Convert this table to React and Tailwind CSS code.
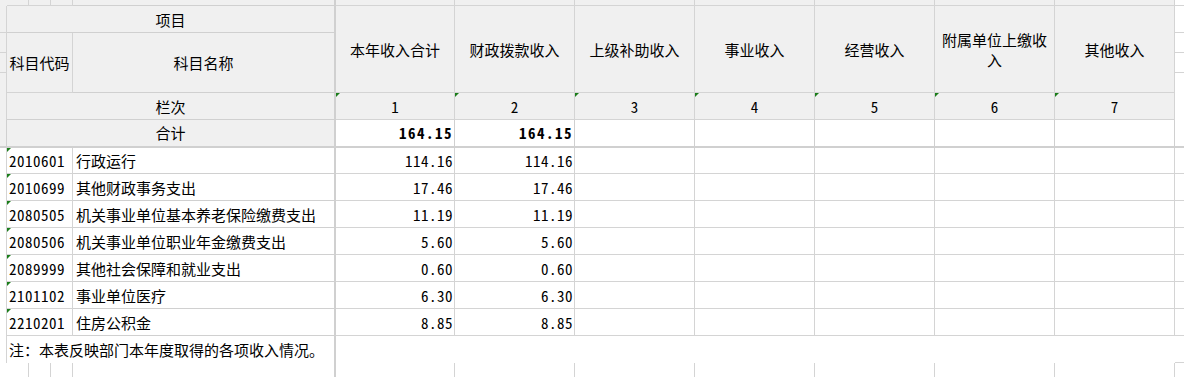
import React from 'react';

const heads = ['本年收入合计', '财政拨款收入', '上级补助收入', '事业收入', '经营收入', '附属单位上缴收入', '其他收入'];

const rows = [
    ['2010601', '行政运行', '114.16'],
    ['2010699', '其他财政事务支出', '17.46'],
    ['2080505', '机关事业单位基本养老保险缴费支出', '11.19'],
    ['2080506', '机关事业单位职业年金缴费支出', '5.60'],
    ['2089999', '其他社会保障和就业支出', '0.60'],
    ['2101102', '事业单位医疗', '6.30'],
    ['2210201', '住房公积金', '8.85'],
];

// little green corner marker on cells stored as text
const Flag = () => (
    <span className="absolute left-0 top-0 h-0 w-0 border-t-[4px] border-r-[4px] border-t-[#1b7d1b] border-r-transparent" />
);

const App = () => {
    return (
        <div className="grid h-[377px] w-[1184px] overflow-hidden bg-white font-['Noto_Sans_CJK_SC',sans-serif] text-[15px] leading-[20px] text-black [font-feature-settings:'hwid'] grid-cols-[7px_22px_22px_22px_263px_119px_repeat(6,120px)_1fr] grid-rows-[6px_27px_20px_20px_20px_27px_28px_26px_repeat(6,27px)_27px_1fr]">
            {/* top strip */}
            <div className="bg-[#f0f0f0]" />
            <div className="bg-[#f0f0f0] border-r border-b border-[#d4d4d4]" />
            <div className="bg-[#f0f0f0] border-r border-b border-[#d4d4d4]" />
            <div className="bg-[#f0f0f0] border-r border-b border-[#d4d4d4]" />
            <div className="bg-[#f0f0f0] border-r-2 border-b border-[#d0d0d0]" />
            {heads.map((h) => (
                <div key={h} className="bg-[#f0f0f0] border-r border-b border-[#d4d4d4]" />
            ))}
            <div className="border-b border-[#d4d4d4]" />

            {/* header row 1 */}
            <div className="bg-[#f0f0f0] border-r border-b border-[#d4d4d4]" />
            <div className="col-span-4 flex items-center justify-center pt-[1px] bg-[#f0f0f0] border-r-2 border-b border-[#d0d0d0]">
                项目
            </div>
            {heads.map((h) => (
                <div key={h} className="row-span-4 flex items-center justify-center px-[5px] pt-[1px] text-center bg-[#f0f0f0] border-r border-b border-[#d4d4d4]">
                    {h}
                </div>
            ))}
            <div className="border-b border-[#d4d4d4]" />

            {/* header row 2 */}
            <div className="bg-[#f0f0f0] border-r border-b border-[#d4d4d4]" />
            <div className="col-span-3 row-span-3 flex items-center justify-center pt-[1px] bg-[#f0f0f0] border-r border-b border-[#d4d4d4]">
                科目代码
            </div>
            <div className="row-span-3 flex items-center justify-center pt-[1px] bg-[#f0f0f0] border-r-2 border-b border-[#d0d0d0]">
                科目名称
            </div>
            <div className="border-b border-[#d4d4d4]" />
            <div className="bg-[#f0f0f0] border-r border-b border-[#d4d4d4]" />
            <div className="border-b border-[#d4d4d4]" />
            <div className="bg-[#f0f0f0] border-r border-[#d4d4d4]" />
            <div />

            {/* 栏次 */}
            <div className="bg-[#f0f0f0] border-r border-[#d4d4d4]" />
            <div className="col-span-4 flex items-center justify-center pt-[1px] bg-[#f0f0f0] border-r-2 border-b border-[#d0d0d0]">
                栏次
            </div>
            {heads.map((h, i) => (
                <div key={h} className="relative flex items-center justify-center pt-[1px] bg-[#f0f0f0] border-r border-b border-[#d4d4d4]">
                    <Flag />
                    {i + 1}
                </div>
            ))}
            <div />

            {/* 合计 */}
            <div className="bg-[#f0f0f0] border-r border-b-2 border-[#d0d0d0]" />
            <div className="col-span-4 flex items-center justify-center bg-[#f0f0f0] border-r-2 border-b-2 border-[#d0d0d0]">
                合计
            </div>
            {heads.map((h, i) => (
                <div key={h} className="flex items-center justify-end pr-[1px] font-bold tracking-[1.5px] border-r border-b-2 border-[#d0d0d0]">
                    {i < 2 ? '164.15' : ''}
                </div>
            ))}
            <div className="border-b-2 border-[#d0d0d0]" />

            {/* data rows */}
            {rows.map(([code, name, amount]) => (
                <React.Fragment key={code}>
                    <div className="border-r border-[#d4d4d4]" />
                    <div className="relative col-span-3 flex items-center pl-[2px] pt-[1px] tracking-[0.5px] border-r border-b border-[#d4d4d4]">
                        <Flag />
                        {code}
                    </div>
                    <div className="flex items-center pl-[3px] pt-[1px] whitespace-nowrap border-r-2 border-b border-[#d0d0d0]">
                        {name}
                    </div>
                    {heads.map((h, i) => (
                        <div key={h} className="flex items-center justify-end pr-[1px] pt-[1px] tracking-[0.5px] border-r border-b border-[#d4d4d4]">
                            {i < 2 ? amount : ''}
                        </div>
                    ))}
                    <div className="border-b border-[#d4d4d4]" />
                </React.Fragment>
            ))}

            {/* note */}
            <div className="border-r border-[#d4d4d4]" />
            <div className="col-span-4 flex items-center pl-[2px] pt-[1px] whitespace-nowrap border-r-2 border-[#d0d0d0]">
                注：本表反映部门本年度取得的各项收入情况。
            </div>
            <div className="col-span-7" />
            <div className="border-b border-[#d4d4d4]" />

            {/* bottom strip */}
            <div />
            <div className="border-r border-[#d4d4d4]" />
            <div className="border-r border-[#d4d4d4]" />
            <div className="border-r border-[#d4d4d4]" />
            <div className="border-r-2 border-[#d0d0d0]" />
            {heads.map((h) => (
                <div key={h} className="border-r border-[#d4d4d4]" />
            ))}
            <div />
        </div>
    );
};

export default App;
